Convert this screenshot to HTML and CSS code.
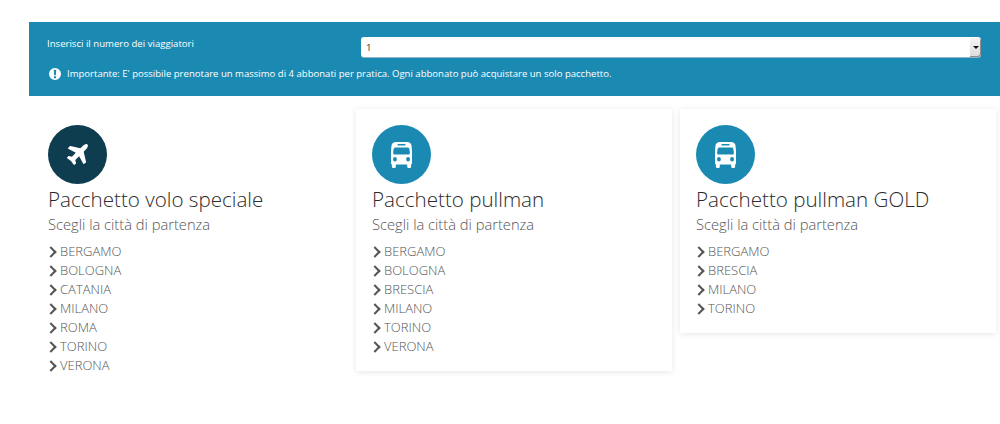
FILE: index.html
```html
<!DOCTYPE html>
<html lang="it">
<head>
<meta charset="utf-8">
<title>Pacchetti</title>
<link rel="stylesheet" href="styles.css">
</head>
<body>
<section class="banner">
  <div class="form-row">
    <label class="form-label" for="travellers">Inserisci il numero dei viaggiatori</label>
    <div class="select-wrap">
      <select id="travellers" class="select"><option>1</option><option>2</option><option>3</option><option>4</option></select>
      <span class="select-btn"><span class="select-arrow"></span></span>
    </div>
  </div>
  <p class="notice">
    <svg class="notice-icon" viewBox="0 0 24 24"><path fill="#fff" d="M12 0a12 12 0 1 0 0 24a12 12 0 0 0 0-24zM9.600 3.500h4.800l-.6 11h-3.600zM9.800 16.500h4.400v4h-4.400z" fill-rule="evenodd"/></svg>
    Importante: E' possibile prenotare un massimo di 4 abbonati per pratica. Ogni abbonato può acquistare un solo pacchetto.
  </p>
</section>
<main class="cards">
  <article class="card card-plain">
    <div class="badge badge-dark">
      <svg class="plane" viewBox="0 0 1408 1408"><path fill="#fff" d="M1376 32q44 52 12 148t-108 172l-161 161 160 696q5 19-12 33l-128 96q-7 6-19 6-4 0-7-1-15-3-21-16l-279-508-259 259 53 194q5 17-8 31l-96 96q-9 9-23 9h-2q-15-2-24-13l-189-252-252-189q-11-7-13-23-1-13 9-25l96-97q9-9 23-9 6 0 8 1l194 53 259-259-508-279q-14-8-17-24-2-16 9-27l128-128q14-13 30-8l665 159 160-160q76-76 172-108t148 12z"/></svg>
    </div>
    <h2 class="title">Pacchetto volo speciale</h2>
    <p class="subtitle">Scegli la città di partenza</p>
    <ul class="cities">
      <li>BERGAMO</li><li>BOLOGNA</li><li>CATANIA</li><li>MILANO</li><li>ROMA</li><li>TORINO</li><li>VERONA</li>
    </ul>
  </article>
  <article class="card">
    <div class="badge">
      <svg class="bus" viewBox="0 0 24 26" preserveAspectRatio="none"><path fill="#fff" fill-rule="evenodd" d="M6 0h12q5 0 5.500 4l.5 5v12q0 1.500-1.500 1.500H23v2q0 1.500-1.500 1.500h-1.500q-1.500 0-1.500-1.500v-2H5.500v2Q5.500 26 4 26H2.500Q1 26 1 24.500v-2H1.500Q0 22.500 0 21V9l.5-5Q1 0 6 0zM7.500 2v1.500h9V2zM4.500 5.500Q3.300 5.500 3 7l-.6 4q0 1.500 1.600 1.500h16q1.600 0 1.600-1.500L21 7q-.3-1.500-1.500-1.500zM4.500 15a2.200 2.200 0 1 0 0 4.400a2.200 2.200 0 0 0 0-4.400zM19.500 15a2.200 2.200 0 1 0 0 4.400a2.200 2.200 0 0 0 0-4.400z"/></svg>
    </div>
    <h2 class="title">Pacchetto pullman</h2>
    <p class="subtitle">Scegli la città di partenza</p>
    <ul class="cities">
      <li>BERGAMO</li><li>BOLOGNA</li><li>BRESCIA</li><li>MILANO</li><li>TORINO</li><li>VERONA</li>
    </ul>
  </article>
  <article class="card">
    <div class="badge">
      <svg class="bus" viewBox="0 0 24 26" preserveAspectRatio="none"><path fill="#fff" fill-rule="evenodd" d="M6 0h12q5 0 5.500 4l.5 5v12q0 1.500-1.500 1.500H23v2q0 1.500-1.500 1.500h-1.500q-1.500 0-1.500-1.500v-2H5.500v2Q5.500 26 4 26H2.500Q1 26 1 24.500v-2H1.500Q0 22.500 0 21V9l.5-5Q1 0 6 0zM7.500 2v1.500h9V2zM4.500 5.500Q3.300 5.500 3 7l-.6 4q0 1.500 1.600 1.500h16q1.600 0 1.600-1.500L21 7q-.3-1.500-1.500-1.500zM4.500 15a2.200 2.200 0 1 0 0 4.400a2.200 2.200 0 0 0 0-4.400zM19.500 15a2.200 2.200 0 1 0 0 4.400a2.200 2.200 0 0 0 0-4.400z"/></svg>
    </div>
    <h2 class="title">Pacchetto pullman GOLD</h2>
    <p class="subtitle">Scegli la città di partenza</p>
    <ul class="cities">
      <li>BERGAMO</li><li>BRESCIA</li><li>MILANO</li><li>TORINO</li>
    </ul>
  </article>
</main>
</body>
</html>
```
FILE: styles.css
```css
* { box-sizing: border-box; }
html, body { height: 100%; overflow: hidden; }
body {
  margin: 0;
  padding: 22px 0 0 29px;
  background: #fff;
  font-family: "Open Sans", "Liberation Sans", sans-serif;
  color: #444;
}
.banner {
  height: 74px;
  padding: 15px 19px 0 18px;
  background: #1b8ab3;
  color: #fff;
}
.form-row { display: flex; align-items: flex-start; }
.form-label {
  flex: 0 0 314px;
  font-size: 9.6px;
  line-height: 14px;
}
.select-wrap { position: relative; flex: 1; height: 20px; }
.select {
  display: block;
  width: 100%;
  height: 20px;
  padding: 0 5px;
  border: 0;
  border-radius: 3px;
  background: #fff;
  color: #333;
  font: 9.6px "Open Sans", "Liberation Sans", sans-serif;
  appearance: none;
  box-shadow: 0 1px 0 #8fb4c6;
}
.select-btn {
  position: absolute;
  top: 1px;
  right: 0;
  width: 11px;
  height: 19px;
  display: flex;
  align-items: center;
  justify-content: center;
  border-radius: 0 3px 3px 0;
  background: linear-gradient(#f4f4f4, #dcdcdc);
  box-shadow: inset -1px -1px 0 #8a8f92;
  pointer-events: none;
}
.select-arrow {
  width: 0;
  height: 0;
  border: 3px solid transparent;
  border-top: 3px solid #111;
  border-bottom: 0;
}
.notice {
  display: flex;
  align-items: center;
  gap: 5px;
  margin: 10px 0 0 2px;
  font-size: 9.55px;
  line-height: 14px;
}
.notice-icon { width: 12px; height: 12px; flex: none; margin-right: 1px; }
.cards {
  display: flex;
  align-items: flex-start;
  gap: 8px;
  margin-top: 13px;
  padding-left: 3px;
}
.card {
  flex: 0 0 316px;
  padding: 16px 16px 15px;
  background: #fff;
  box-shadow: 0 1px 6px rgba(0, 0, 0, 0.1);
}
.card-plain { box-shadow: none; }
.badge {
  display: flex;
  align-items: center;
  justify-content: center;
  width: 59px;
  height: 59px;
  border-radius: 50%;
  background: #1b8ab3;
}
.badge-dark { background: #0e3d50; }
.plane { width: 21px; height: 21px; }
.bus { width: 21px; height: 26px; }
.title {
  margin: 1px 0 0;
  font-size: 20.6px;
  font-weight: 300;
  line-height: 28px;
  color: #2b2b2b;
}
.subtitle {
  margin: 1px 0 0;
  font-size: 14.7px;
  font-weight: 300;
  line-height: 20px;
  color: #555;
}
.cities {
  margin: 8px 0 0;
  padding: 0;
  list-style: none;
  font-size: 13px;
  font-weight: 300;
  line-height: 19px;
  color: #555;
}
.cities li { display: flex; align-items: center; gap: 4px; }
.cities li::before {
  content: "";
  width: 6px;
  height: 6px;
  margin: 1px 1px 0 -1px;
  border-top: 2px solid #555;
  border-right: 2px solid #555;
  transform: rotate(45deg);
}
```
